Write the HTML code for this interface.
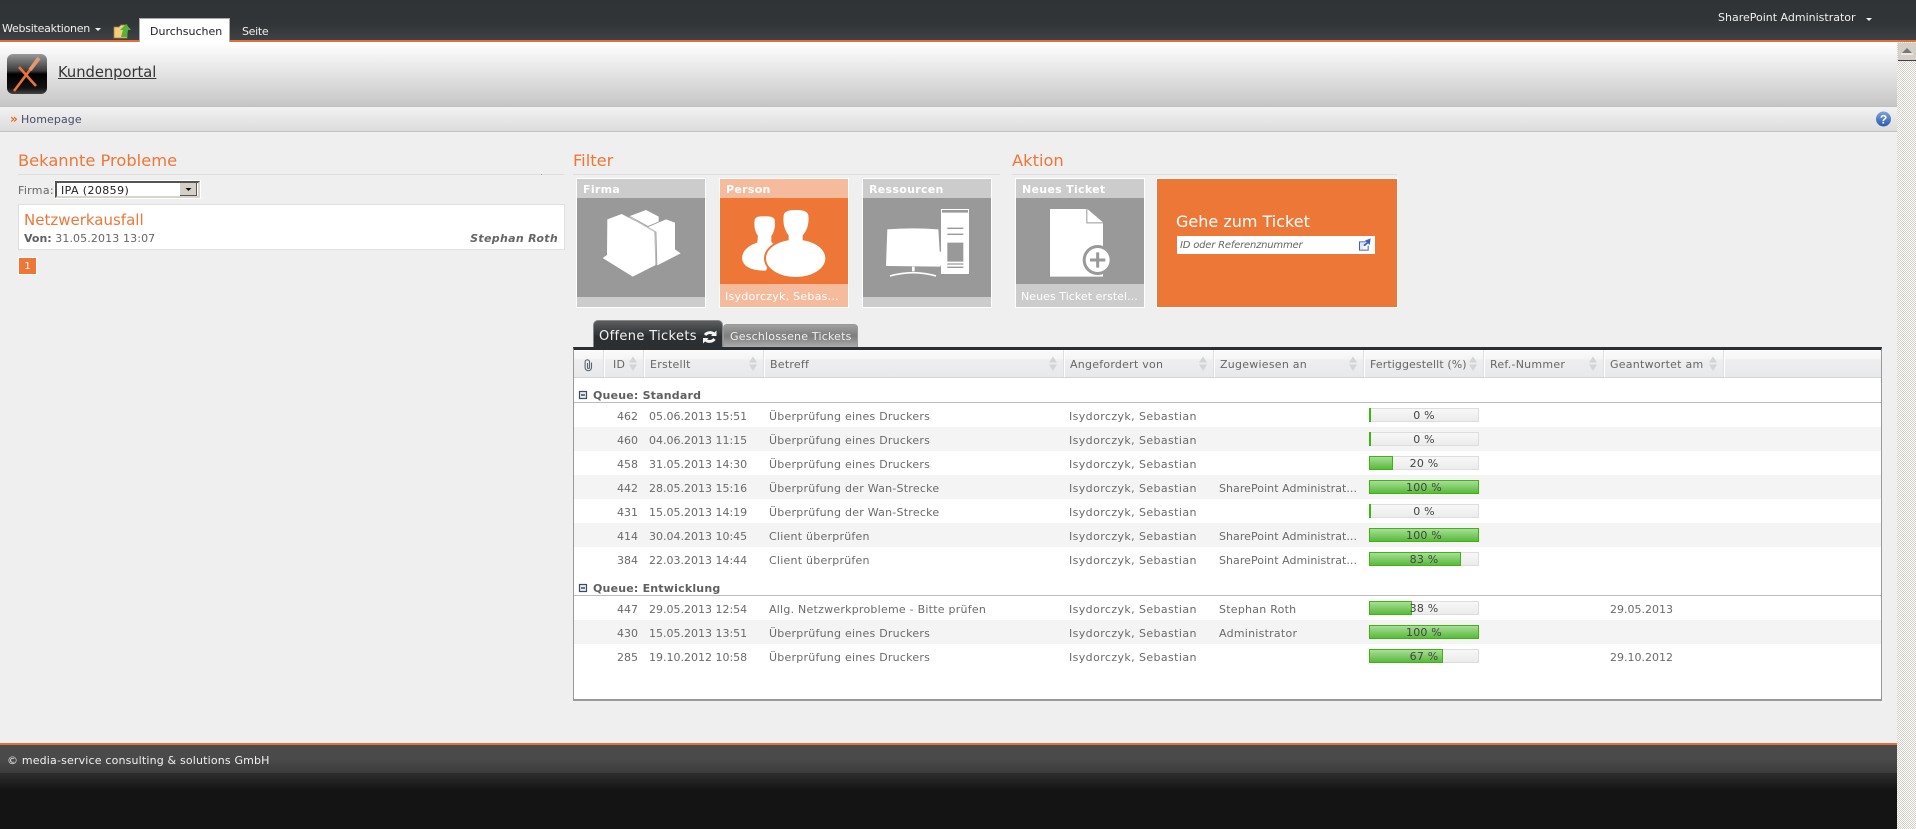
<!DOCTYPE html>
<html lang="de"><head><meta charset="utf-8"><title>Kundenportal</title>
<style>
html,body{margin:0;padding:0;width:1916px;height:829px;overflow:hidden;background:#efefef}
body{position:relative;font:11px/16px "DejaVu Sans","Liberation Sans",sans-serif;color:#666}
div,span,b,i,svg{position:absolute;white-space:nowrap}
b.n,i.n{position:static}
.bar{left:0;top:0;width:1916px;height:40px;background:linear-gradient(#2f3335,#313537 60%,#3f4244);}
.ol{left:0;top:40px;width:1916px;height:2px;background:#e2703a}
.sb{left:1897px;top:42px;width:19px;height:787px;background:repeating-conic-gradient(#d4d0c8 0 25%,#fff 0 50%) 0 0/2px 2px}
.btn{left:1898px;top:43px;width:18px;height:17px;background:#d4d0c8;border-bottom:1px solid #404040}
.hd{left:0;top:42px;width:1897px;height:64px;background:linear-gradient(#fff,#e6e6e6 45%,#c6c6c6)}
.crumb{left:0;top:106px;width:1897px;height:26px;box-sizing:border-box;border-top:1px solid #c0c0c0;border-bottom:1px solid #c2c2c2;background:linear-gradient(#f2f2f2,#dcdcdc)}
.h2{font-size:16.3px;line-height:20px;color:#ee7738;top:151px}
.ln{height:1px;top:174px;background:#dedede}
.tile{width:128px;height:128px;top:178px;border:1px solid #fff;background:#999;overflow:hidden}
.tt{left:0;top:0;width:100%;height:19px;background:#ccc;color:#fff;font-weight:bold;line-height:22px;text-indent:6px;letter-spacing:.3px}
.tf{left:0;width:100%;bottom:0;background:#ccc;color:#fff;text-indent:5px;line-height:26px;height:23px;letter-spacing:.25px}
.box{left:573px;top:347px;width:1309px;height:354px;box-sizing:border-box;background:#fff;border:1px solid #999;border-top:3px solid #2c2f31;border-bottom:2px solid #999}
.th{top:350px;height:28px;left:574px;width:1307px;background:linear-gradient(#fbfbfb,#f5f5f5 34%,#eeeeef 36%,#e8e9eb);border-bottom:1px solid #d5d5d5;box-sizing:border-box}
.sep{top:350px;width:2px;height:27px;background:linear-gradient(90deg,#e0e0e0 50%,#fff 50%)}
.hc{top:357px;color:#666;letter-spacing:.25px}
.q{left:593px;font-weight:bold;color:#5f5f5f;letter-spacing:.2px}
.ql{left:574px;width:1307px;height:1px;background:#bdbdbd}
.r{left:574px;width:1307px;height:24px;color:#6a6a6a}
.r span{top:6px}
.s{background:#f4f4f4}
.id{right:1243px;color:#6a6a6a}.dt{left:75px}.su{left:195px;letter-spacing:.24px}.re{left:495px;letter-spacing:.4px}.as{left:645px;letter-spacing:.25px}.an{left:1036px}
.as.e{letter-spacing:.05px}
.pg{left:795px;top:5px;width:110px;height:14px;box-sizing:border-box;border:1px solid #ddd;background:linear-gradient(#f8f8f8,#ececec)}
.pf{left:-1px;top:-1px;border:1px solid #3fb60e;box-sizing:content-box;height:12px;background:linear-gradient(#a9dd98,#58bb3b)}
.r span.pt{left:-1px;top:-1px;width:110px;text-align:center;color:#444;line-height:16px;letter-spacing:.2px}
</style></head><body>

<div class="bar"></div><div class="ol"></div>
<span style="left:2px;top:21px;color:#f0f0f0;letter-spacing:-.25px">Websiteaktionen</span>
<span style="left:1718px;top:10px;color:#f0f0f0">SharePoint Administrator</span>
<div style="left:139px;top:18px;width:89px;height:26px;background:#fff;border:1px solid #aaa;border-bottom:0"></div>
<span style="left:150px;top:24px;color:#222">Durchsuchen</span>
<span style="left:242px;top:24px;color:#eee;letter-spacing:-.3px">Seite</span>

<div class="hd"></div>
<span style="left:58px;top:64px;font-size:14.7px;line-height:18px;color:#333;text-decoration:underline">Kundenportal</span>
<div class="crumb"></div>
<span style="left:21px;top:112px;color:#4a4a6a;letter-spacing:.1px">Homepage</span>
<span style="left:10px;top:111px;color:#e8651e;font-weight:bold;font-size:12px">»</span>
<div class="sb"></div><div class="btn"></div>

<span class="h2" style="left:18px">Bekannte Probleme</span>
<div class="ln" style="left:18px;width:546px"></div>
<div class="ln" style="left:541px;width:1px;background:#aaa"></div>
<span style="left:18px;top:183px;color:#666;letter-spacing:.3px">Firma:</span>
<div style="left:55px;top:181px;width:141px;height:13px;background:#fff;border:2px solid;border-color:#555 #d8d5cd #d8d5cd #555;outline:1px solid #fff"></div>
<span style="left:61px;top:183px;color:#222;letter-spacing:.4px">IPA (20859)</span>
<div style="left:180px;top:183px;width:16px;height:12px;background:#d4d0c8;border-right:1px solid #555;border-bottom:1px solid #555"></div>
<div style="left:18px;top:204px;width:545px;height:44px;background:#fff;border:1px solid #e0e0e0"></div>
<span style="left:24px;top:211px;font-size:15px;line-height:18px;color:#ee7738">Netzwerkausfall</span>
<span style="left:24px;top:231px"><b class="n" style="color:#5f6064">Von:</b> <span style="position:static;letter-spacing:.12px">31.05.2013 13:07</span></span>
<span style="right:1358px;top:231px;color:#666;font-weight:bold;font-style:italic;letter-spacing:.32px">Stephan Roth</span>
<div style="left:18px;top:257px;width:19px;height:18px;background:#ee7738;border:1px solid #fff;box-sizing:border-box;color:#fff;text-align:center;font-size:10px;line-height:17px">1</div>

<span class="h2" style="left:573px">Filter</span>
<div class="ln" style="left:573px;width:427px"></div>
<span class="h2" style="left:1012px">Aktion</span>
<div class="ln" style="left:1012px;width:385px"></div>

<div class="tile" style="left:576px"><div class="tt">Firma</div><div class="tf" style="height:10px"></div></div>
<div class="tile" style="left:719px;background:#ee7738"><div class="tt" style="background:#f5bb9c">Person</div><div class="tf" style="background:#f5bb9c">Isydorczyk, Sebas...</div></div>
<div class="tile" style="left:862px"><div class="tt">Ressourcen</div><div class="tf" style="height:10px"></div></div>
<div class="tile" style="left:1015px"><div class="tt">Neues Ticket</div><div class="tf" style="letter-spacing:.05px">Neues Ticket erstel...</div></div>
<div style="left:1156px;top:178px;width:240px;height:128px;background:#ed7737;border:1px solid #fff"></div>
<span style="left:1176px;top:211px;font-size:16px;line-height:22px;color:#fff">Gehe zum Ticket</span>
<div style="left:1177px;top:236px;width:198px;height:18px;background:#fff"></div>
<span style="left:1180px;top:238px;font-size:10px;font-style:italic;color:#666;letter-spacing:-.2px">ID oder Referenznummer</span>

<div style="left:593px;top:320px;width:130px;height:27px;box-sizing:border-box;border:1px solid #888;border-bottom:0;border-radius:5px 5px 0 0;background:linear-gradient(#5b5d5f,#2c2f31 60%)"></div>
<span style="left:599px;top:329px;font-size:13px;color:#f4f4f4;letter-spacing:.35px">Offene Tickets</span>
<div style="left:723px;top:324px;width:135px;height:23px;box-sizing:border-box;border:1px solid #999;border-bottom:0;border-radius:4px 4px 0 0;background:linear-gradient(#a0a0a0,#7d7d7d 50%,#adadad)"></div>
<span style="left:730px;top:329px;color:#eee;letter-spacing:.2px">Geschlossene Tickets</span>

<div class="box"></div>
<div class="th"></div>
<div class="sep" style="left:603px"></div><div class="sep" style="left:643px"></div><div class="sep" style="left:763px"></div><div class="sep" style="left:1063px"></div><div class="sep" style="left:1213px"></div><div class="sep" style="left:1363px"></div><div class="sep" style="left:1483px"></div><div class="sep" style="left:1603px"></div><div class="sep" style="left:1723px"></div>
<span class="hc" style="left:613px">ID</span><span class="hc" style="left:650px">Erstellt</span><span class="hc" style="left:770px">Betreff</span><span class="hc" style="left:1070px">Angefordert von</span><span class="hc" style="left:1220px">Zugewiesen an</span><span class="hc" style="left:1370px;letter-spacing:.1px">Fertiggestellt (%)</span><span class="hc" style="left:1490px">Ref.-Nummer</span><span class="hc" style="left:1610px">Geantwortet am</span>

<span class="q" style="top:388px">Queue: Standard</span><div class="ql" style="top:402px"></div>
<div class="r" style="top:403px"><span class="id">462</span><span class="dt">05.06.2013 15:51</span><span class="su">Überprüfung eines Druckers</span><span class="re">Isydorczyk, Sebastian</span><div class="pg"><div class="pf" style="width:0"></div><span class="pt">0 %</span></div></div>
<div class="r s" style="top:427px"><span class="id">460</span><span class="dt">04.06.2013 11:15</span><span class="su">Überprüfung eines Druckers</span><span class="re">Isydorczyk, Sebastian</span><div class="pg"><div class="pf" style="width:0"></div><span class="pt">0 %</span></div></div>
<div class="r" style="top:451px"><span class="id">458</span><span class="dt">31.05.2013 14:30</span><span class="su">Überprüfung eines Druckers</span><span class="re">Isydorczyk, Sebastian</span><div class="pg"><div class="pf" style="width:22px"></div><span class="pt">20 %</span></div></div>
<div class="r s" style="top:475px"><span class="id">442</span><span class="dt">28.05.2013 15:16</span><span class="su">Überprüfung der Wan-Strecke</span><span class="re">Isydorczyk, Sebastian</span><span class="as e">SharePoint Administrat...</span><div class="pg"><div class="pf" style="width:108px"></div><span class="pt">100 %</span></div></div>
<div class="r" style="top:499px"><span class="id">431</span><span class="dt">15.05.2013 14:19</span><span class="su">Überprüfung der Wan-Strecke</span><span class="re">Isydorczyk, Sebastian</span><div class="pg"><div class="pf" style="width:0"></div><span class="pt">0 %</span></div></div>
<div class="r s" style="top:523px"><span class="id">414</span><span class="dt">30.04.2013 10:45</span><span class="su">Client überprüfen</span><span class="re">Isydorczyk, Sebastian</span><span class="as e">SharePoint Administrat...</span><div class="pg"><div class="pf" style="width:108px"></div><span class="pt">100 %</span></div></div>
<div class="r" style="top:547px"><span class="id">384</span><span class="dt">22.03.2013 14:44</span><span class="su">Client überprüfen</span><span class="re">Isydorczyk, Sebastian</span><span class="as e">SharePoint Administrat...</span><div class="pg"><div class="pf" style="width:90px"></div><span class="pt">83 %</span></div></div>

<span class="q" style="top:581px">Queue: Entwicklung</span><div class="ql" style="top:595px"></div>
<div class="r" style="top:596px"><span class="id">447</span><span class="dt">29.05.2013 12:54</span><span class="su">Allg. Netzwerkprobleme - Bitte prüfen</span><span class="re">Isydorczyk, Sebastian</span><span class="as">Stephan Roth</span><div class="pg"><div class="pf" style="width:41px"></div><span class="pt">38 %</span></div><span class="an">29.05.2013</span></div>
<div class="r s" style="top:620px"><span class="id">430</span><span class="dt">15.05.2013 13:51</span><span class="su">Überprüfung eines Druckers</span><span class="re">Isydorczyk, Sebastian</span><span class="as">Administrator</span><div class="pg"><div class="pf" style="width:108px"></div><span class="pt">100 %</span></div></div>
<div class="r" style="top:644px"><span class="id">285</span><span class="dt">19.10.2012 10:58</span><span class="su">Überprüfung eines Druckers</span><span class="re">Isydorczyk, Sebastian</span><div class="pg"><div class="pf" style="width:72px"></div><span class="pt">67 %</span></div><span class="an">29.10.2012</span></div>

<div style="left:0;top:743px;width:1897px;height:2px;background:#e2703a"></div>
<div style="left:0;top:745px;width:1897px;height:28px;background:linear-gradient(#4b4b4b,#4a4a4a 50%,#3b3b3b);border-bottom:1px solid #2b2b2b"></div>
<div style="left:0;top:774px;width:1897px;height:55px;background:linear-gradient(#2c2c2c,#141414 30%,#141414)"></div>
<span style="left:7px;top:753px;color:#f0f0f0;letter-spacing:.17px">© media-service consulting &amp; solutions GmbH</span>

<svg style="left:0;top:0" width="1916" height="829" viewBox="0 0 1916 829">
<defs><linearGradient id="lg" x1="0" y1="0" x2="0" y2="1"><stop offset="0" stop-color="#9a9a9a"/><stop offset=".42" stop-color="#3a3a3a"/><stop offset=".5" stop-color="#000"/><stop offset=".85" stop-color="#111"/><stop offset="1" stop-color="#444"/></linearGradient>
<linearGradient id="hb" x1="0" y1="0" x2="0" y2="1"><stop offset="0" stop-color="#7fa3dd"/><stop offset="1" stop-color="#2a5aaf"/></linearGradient></defs>
<!-- logo -->
<rect x="7" y="54" width="40" height="40" rx="6" fill="url(#lg)"/>
<path d="M19 67L36 86M39 58L14 91" stroke="#e8743a" stroke-width="2.6" fill="none"/>
<path d="M39 58L30 70" stroke="#f3b28f" stroke-width="4" opacity=".6"/>
<!-- menu arrows -->
<path d="M95 28h6l-3 3zM1866 18h6l-3 3z" fill="#eee"/>
<!-- folder -->
<path d="M114 27h5l2-2h6v13h-13z" fill="#f0cf7e" stroke="#a87f33" stroke-width=".8"/>
<path d="M121 37l2-7h-3l6-6 5 6h-3l-1 7z" fill="#54b23c"/>
<!-- scroll up -->
<path d="M1902 53l5-5 5 5z" fill="#777"/><path d="M1901 54h12" stroke="#fff"/>
<!-- help -->
<circle cx="1883.5" cy="119" r="7.5" fill="url(#hb)"/>
<text x="1883.5" y="123.5" text-anchor="middle" font-family="Liberation Sans" font-weight="bold" font-size="12" fill="#fff">?</text>
<!-- Firma -->
<g transform="translate(560 140) scale(.33333)" fill="#fff">
<path d="M142 238L185 222L283 272L287 375L218 410L128 354L141 345Z"/>
<path d="M262 262L318 238L345 248L345 328L362 340L292 376L289 275Z"/>
<path d="M210 228L258 210L296 230L296 245L264 258Z"/>
<path d="M208 230L285 275L288 375" fill="none" stroke="#bdbdbd" stroke-width="4"/>
<!-- Person -->
<path d="M584 240Q586 228 612 229Q642 228 644 240Q648 268 634 288L634 306Q640 312 648 318L618 392Q550 392 546 355Q548 322 592 308L594 288Q580 268 584 240Z"/>
<ellipse cx="707" cy="355" rx="95" ry="62" fill="#ee7738"/>
<path d="M671 226Q674 209 708 210Q742 209 745 226Q749 262 728 286L728 302H686V286Q667 262 671 226Z"/>
<ellipse cx="707" cy="355" rx="89" ry="56"/>
<!-- Ressourcen -->
<path d="M982 268Q1060 262 1135 268L1142 380L978 378Z"/>
<path d="M1056 380h8v14h-8z"/>
<path d="M990 408Q1060 388 1128 408" fill="none" stroke="#fff" stroke-width="5"/>
<path d="M1135 335h10v40h-10z"/>
<path d="M1143 207h84v195h-84z"/>
<g fill="#999"><path d="M1146 210h78v8h-78zM1162 263h48v4h-48zM1162 281h48v4h-48zM1162 308h48v57h-48zM1162 370h48v14h-48z"/></g>
<path d="M1162 374h48v6h-48z"/>
</g>
<!-- Neues Ticket -->
<g transform="translate(1000 140) scale(.33333)">
<path d="M150 207H259V250H309V410H150Z" fill="#fff"/>
<path d="M262 207L309 247H262Z" fill="#fff"/>
<circle cx="293" cy="360" r="45" fill="#999"/>
<circle cx="293" cy="360" r="36" fill="#fff"/>
<path d="M293 337V383M270 360H316" stroke="#999" stroke-width="9"/>
<!-- external link -->
<path d="M1077 304h20v3h-17v22h23v-12h3v15h-29z" fill="#3a5fc8"/>
<path d="M1080 307h17v6l-10 8 5 6h11v2h-23z" fill="#dfe7fb"/>
<path d="M1090 315l10-8-5-5 17-7-3 20-5-5-10 9z" fill="#3a5fc8"/>
</g>
<!-- refresh -->
<g fill="none" stroke="#f4f4f4" stroke-width="2.8">
<path d="M705 335A6 5.5 0 0 1 714 334"/><path d="M714.500 339A6 5.500 0 0 1 705.500 340"/>
</g>
<path d="M711 336h5.500v-5.500zM708.500 338h-5.500v5.500z" fill="#f4f4f4"/>
<!-- paperclip -->
<path d="M587.500 363v4.500a1 1 0 0 0 2 0v-5.500a2.200 2.200 0 0 0-4.400 0v5.500a3.200 3.200 0 0 0 6.400 0v-5" fill="none" stroke="#5a6470" stroke-width="1.1"/>
<!-- queue toggles -->
<g fill="#e8ecf2" stroke="#3f4c60" stroke-width="1.2"><rect x="579.500" y="391.500" width="7" height="7"/><rect x="579.500" y="584.500" width="7" height="7"/></g>
<path d="M581 395h4M581 588h4" stroke="#3f4c60" stroke-width="1.4"/>
<!-- sort arrows -->
<path fill="#d2d4d6" d="M633 356.500l4 6h-8zM633 371l4-6.500h-8zM753 356.500l4 6h-8zM753 371l4-6.500h-8zM1053 356.500l4 6h-8zM1053 371l4-6.500h-8zM1203 356.500l4 6h-8zM1203 371l4-6.500h-8zM1353 356.500l4 6h-8zM1353 371l4-6.500h-8zM1473 356.500l4 6h-8zM1473 371l4-6.500h-8zM1593 356.500l4 6h-8zM1593 371l4-6.500h-8zM1713 356.500l4 6h-8zM1713 371l4-6.500h-8z"/>
<!-- select arrow -->
<path d="M185.500 188h6l-3 3z" fill="#111"/>
</svg>
</body></html>
